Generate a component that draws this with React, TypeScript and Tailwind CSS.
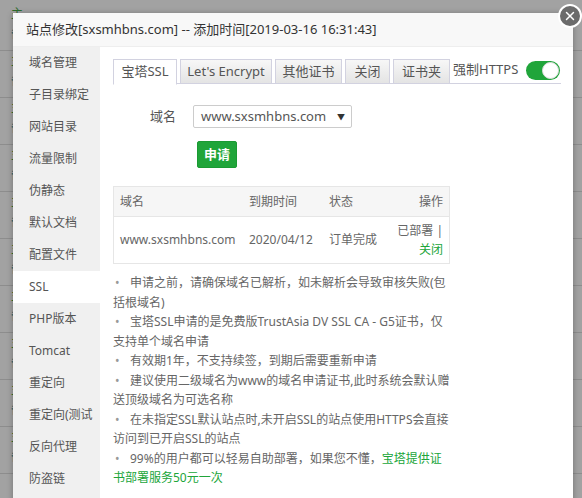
import { X } from "lucide-react";

const menu = [
  "域名管理",
  "子目录绑定",
  "网站目录",
  "流量限制",
  "伪静态",
  "默认文档",
  "配置文件",
  "SSL",
  "PHP版本",
  "Tomcat",
  "重定向",
  "重定向(测试",
  "反向代理",
  "防盗链",
];

const tabs = [
  { label: "宝塔SSL", w: "w-[64px]", active: true },
  { label: "Let's Encrypt", w: "w-[92px]" },
  { label: "其他证书", w: "w-[67px]" },
  { label: "关闭", w: "w-[45px]" },
  { label: "证书夹", w: "w-[57px]" },
];

function Bullet() {
  return <span className="inline-block w-[17px] pl-[2px] text-[#999]">•</span>;
}

export default function App() {
  const rows = Array.from({ length: 10 });

  return (
    <div className="relative w-[582px] h-[498px] overflow-hidden bg-[#a2a2a2] font-['Noto_Sans','Noto_Sans_CJK_SC',sans-serif]">
      {/* page behind the overlay */}
      <div className="pt-[4px]">
        {rows.map((_, i) => (
          <div key={i} className="h-[47px] border-b border-[#8d8d8d] pl-[11px] text-[12px] leading-[20px]">
            <div className="text-[#2d6e2d]">主</div>
            <div className="text-[#1d5f6b]">备</div>
          </div>
        ))}
      </div>

      {/* modal */}
      <div className="absolute left-[13px] top-[13px] w-[560px] h-[500px] bg-white shadow-[0_1px_6px_rgba(0,0,0,0.3)] flex flex-col">
        <div className="h-[34px] shrink-0 bg-[#f8f8f8] border-b border-[#eee] pl-[13px] flex items-center text-[13px] text-[#333]">
          站点修改[sxsmhbns.com] -- 添加时间[2019-03-16 16:31:43]
        </div>

        <div className="flex flex-1">
          {/* sidebar */}
          <div className="w-[87px] bg-[#f0f0f0]">
            {menu.map((m) => (
              <div
                key={m}
                className={
                  "h-[32px] pl-[16px] flex items-center text-[12px] text-[#555] whitespace-nowrap overflow-hidden " +
                  (m === "SSL" ? "bg-white" : "")
                }
              >
                {m}
              </div>
            ))}
          </div>

          {/* content */}
          <div className="flex-1 pl-[13px] pr-[12px] pt-[12px]">
            <div className="flex items-start border-b border-[#d2d2e0] h-[25px]">
              <div className="flex gap-[3px]">
                {tabs.map((t) => (
                  <div
                    key={t.label}
                    className={
                      t.w +
                      " h-[25px] flex items-center justify-center text-[13px] text-[#555] border border-[#d2d2e0] whitespace-nowrap " +
                      (t.active
                        ? "bg-white border-b-white h-[26px]"
                        : "bg-gradient-to-b from-[#f7f7f7] to-[#e4e4e4]")
                    }
                  >
                    {t.label}
                  </div>
                ))}
              </div>
              <div className="ml-[3px] text-[13px] text-[#555] leading-[20px]">强制HTTPS</div>
              <div className="ml-auto mr-px mt-[2px] w-[34px] h-[19px] rounded-full bg-[#20a53a] flex items-center justify-end pr-px">
                <div className="w-[17px] h-[17px] rounded-full bg-white border border-[#ddd]" />
              </div>
            </div>

            {/* domain select */}
            <div className="mt-[21px] flex items-center">
              <div className="w-[63px] text-right text-[13px] text-[#555]">域名</div>
              <div className="ml-[17px] w-[159px] h-[23px] border border-[#ccc] rounded-[2px] pl-[7px] pr-[6px] flex items-center justify-between text-[13px] text-[#555]">
                <span>www.sxsmhbns.com</span>
                <span className="text-[8px] text-[#333]">▼</span>
              </div>
            </div>

            <button className="mt-[13px] ml-[84px] w-[40px] h-[27px] bg-[#20a53a] border border-[#1b9a33] rounded-[2px] text-white text-[13px] font-semibold">
              申请
            </button>

            {/* table */}
            <div className="mt-[18px] w-[337px] border border-[#e6e6e6] text-[12px] text-[#666]">
              <div className="h-[30px] bg-[#f6f6f6] border-b border-[#e6e6e6] grid grid-cols-[129px_80px_1fr_1fr] items-center pl-[6px] pr-[6px]">
                <span>域名</span>
                <span>到期时间</span>
                <span>状态</span>
                <span className="text-right">操作</span>
              </div>
              <div className="h-[46px] grid grid-cols-[129px_80px_1fr_1fr] items-center pl-[6px] pr-[6px]">
                <span>www.sxsmhbns.com</span>
                <span>2020/04/12</span>
                <span>订单完成</span>
                <span className="text-right leading-[19px]">
                  已部署 |<br />
                  <span className="text-[#20a53a]">关闭</span>
                </span>
              </div>
            </div>

            {/* help list */}
            <ul className="mt-[9px] w-[360px] text-[12px] leading-[19.5px] text-[#666]">
              <li>
                <Bullet />
                申请之前，请确保域名已解析，如未解析会导致审核失败(包<br />括根域名)
              </li>
              <li>
                <Bullet />
                宝塔SSL申请的是免费版TrustAsia DV SSL CA - G5证书，仅<br />支持单个域名申请
              </li>
              <li>
                <Bullet />
                有效期1年，不支持续签，到期后需要重新申请
              </li>
              <li>
                <Bullet />
                建议使用二级域名为www的域名申请证书,此时系统会默认赠<br />送顶级域名为可选名称
              </li>
              <li>
                <Bullet />
                在未指定SSL默认站点时,未开启SSL的站点使用HTTPS会直接<br />访问到已开启SSL的站点
              </li>
              <li>
                <Bullet />
                99%的用户都可以轻易自助部署，如果您不懂，
                <span className="text-[#20a53a]">宝塔提供证<br />书部署服务50元一次</span>
              </li>
            </ul>
          </div>
        </div>
      </div>

      {/* close button */}
      <div className="absolute left-[558px] top-[4px] w-[24px] h-[24px] rounded-full bg-[#6b6b6b] border-2 border-white flex items-center justify-center">
        <X className="w-[14px] h-[14px] text-white" strokeWidth={2.5} />
      </div>
    </div>
  );
}
